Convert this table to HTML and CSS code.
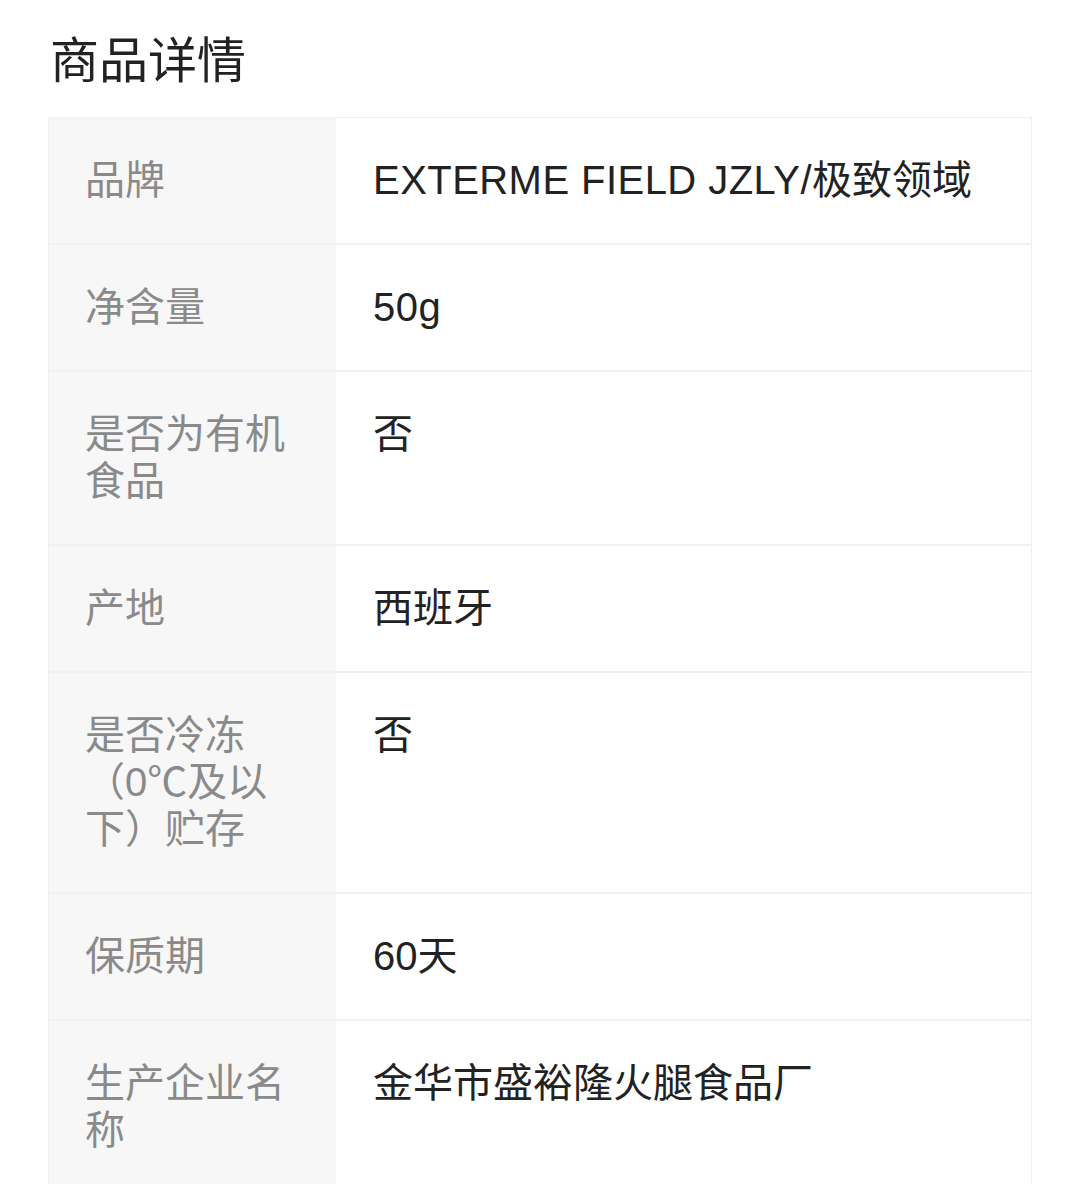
FILE: index.html
```html
<!DOCTYPE html>
<html lang="zh-CN">
<head>
<meta charset="utf-8">
<title>商品详情</title>
<link rel="stylesheet" href="styles.css">
</head>
<body>
<section class="detail">
  <h2 class="detail-title">商品详情</h2>
  <div class="spec-table">
    <div class="spec-row">
      <div class="spec-label">品牌</div>
      <div class="spec-value"><span class="latin">EXTERME FIELD JZLY/</span>极致领域</div>
    </div>
    <div class="spec-row">
      <div class="spec-label">净含量</div>
      <div class="spec-value"><span class="latin">50g</span></div>
    </div>
    <div class="spec-row">
      <div class="spec-label">是否为有机食品</div>
      <div class="spec-value">否</div>
    </div>
    <div class="spec-row">
      <div class="spec-label">产地</div>
      <div class="spec-value">西班牙</div>
    </div>
    <div class="spec-row">
      <div class="spec-label">是否冷冻（0℃及以下）贮存</div>
      <div class="spec-value">否</div>
    </div>
    <div class="spec-row">
      <div class="spec-label">保质期</div>
      <div class="spec-value">60天</div>
    </div>
    <div class="spec-row">
      <div class="spec-label">生产企业名称</div>
      <div class="spec-value">金华市盛裕隆火腿食品厂</div>
    </div>
  </div>
</section>
</body>
</html>
```

FILE: styles.css
```css
html, body {
  margin: 0;
  padding: 0;
  background: #ffffff;
}

body {
  font-family: "Liberation Sans", "Noto Sans CJK SC", sans-serif;
  color: #222222;
}

.detail {
  padding: 31px 47px 0 48px;
}

.detail-title {
  margin: 0 0 26px 2px;
  font-size: 49px;
  line-height: 60px;
  font-weight: 400;
  color: #222222;
}

.spec-table {
  border: 1px solid #f0f0f0;
  border-bottom: none;
  width: 984px;
  box-sizing: border-box;
}

.spec-row {
  display: flex;
  border-bottom: 2px solid #f1f1f1;
}

.spec-label {
  flex: 0 0 287px;
  box-sizing: border-box;
  background: #f7f7f7;
  padding: 39px 50px 39px 36px;
  font-size: 40px;
  line-height: 47px;
  color: #8a8a8a;
}

.spec-value {
  flex: 1;
  padding: 39px 30px 39px 37px;
  font-size: 40px;
  line-height: 47px;
  color: #222222;
}

.latin {
  letter-spacing: 0.45px;
}
```
